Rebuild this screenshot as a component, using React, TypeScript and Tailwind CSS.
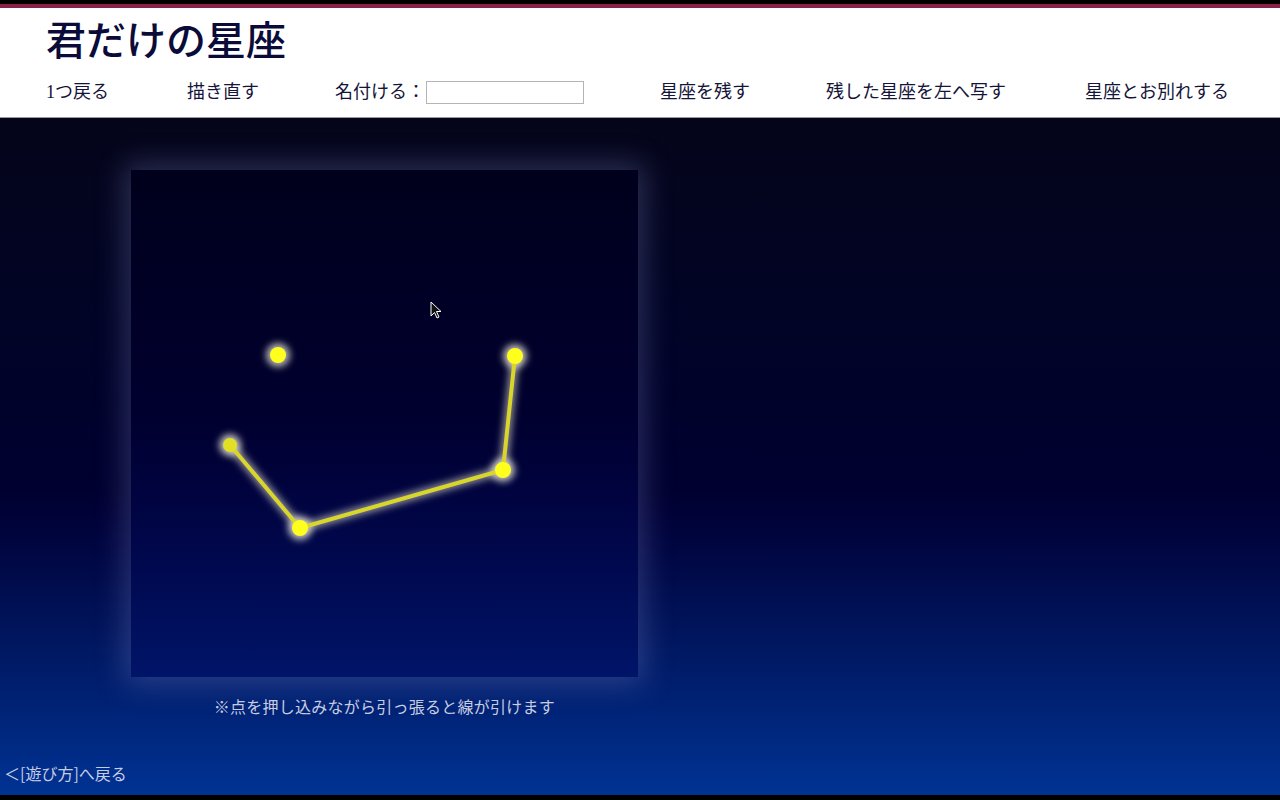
import React from 'react';

const stars = [
  { id: 'a', x: 147, y: 185, r: 8 },
  { id: 'b', x: 99, y: 275, r: 7 },
  { id: 'c', x: 169, y: 358, r: 8 },
  { id: 'd', x: 372, y: 300, r: 8 },
  { id: 'e', x: 384, y: 186, r: 8 },
];

const lines = [
  ['b', 'c'],
  ['c', 'd'],
  ['d', 'e'],
];

const navFont = { fontFamily: '"Liberation Serif", "Noto Sans CJK JP", serif' };

function StarCanvas() {
  const at = (id: string) => stars.find((s) => s.id === id)!;
  return (
    <div className="relative w-[507px] h-[507px] bg-gradient-to-b from-[#00001c] via-[#000030] to-[#001468] shadow-[0_0_28px_6px_rgba(150,160,230,0.28)]">
      <svg width="507" height="507" viewBox="0 0 507 507" className="absolute inset-0">
        <defs>
          <filter id="soft" x="-50%" y="-50%" width="200%" height="200%">
            <feGaussianBlur stdDeviation="3.5" />
          </filter>
        </defs>
        {/* halo */}
        <g stroke="#fffbe0" strokeOpacity="0.55" strokeWidth="9" strokeLinecap="round" filter="url(#soft)">
          {lines.map(([p, q]) => (
            <line key={p + q} x1={at(p).x} y1={at(p).y} x2={at(q).x} y2={at(q).y} />
          ))}
        </g>
        {stars.map((s) => (
          <circle key={s.id + 'h'} cx={s.x} cy={s.y} r={s.r + 4} fill="#fffce8" opacity="0.7" filter="url(#soft)" />
        ))}
        <g stroke="#d8d62c" strokeWidth="4" strokeLinecap="round">
          {lines.map(([p, q]) => (
            <line key={p + q} x1={at(p).x} y1={at(p).y} x2={at(q).x} y2={at(q).y} />
          ))}
        </g>
        {stars.map((s) => (
          <circle key={s.id} cx={s.x} cy={s.y} r={s.r} fill={s.id === 'b' ? '#e2e024' : '#ffff1e'} />
        ))}
        {/* mouse pointer */}
        <path
          d="M300 132 L300 146 L303.5 142.5 L306 148 L308 147 L305.5 141.5 L310 141.5 Z"
          fill="#111"
          stroke="#fff"
          strokeWidth="1"
        />
      </svg>
    </div>
  );
}

export default function App() {
  return (
    <div className="w-[1280px] h-[800px] flex flex-col bg-black overflow-hidden">
      <div className="h-[4px] bg-black" />
      <div className="h-[4px] bg-[#8c1f47]" />

      {/* Header */}
      <header className="h-[110px] bg-white border-b border-[#9a9aa6] pl-[46px] text-[#0b0b3a]" style={navFont}>
        <h1 className="pt-[10px] text-[40px] leading-[48px] font-medium">君だけの星座</h1>
        <nav className="mt-[14px] flex items-center text-[18px] leading-[24px] text-[#14143a]">
          <span className="w-[141px]">1つ戻る</span>
          <span className="w-[148px]">描き直す</span>
          <div className="w-[325px] flex items-center">
            <span>名付ける：</span>
            <input className="ml-[1px] w-[158px] h-[23px] border border-[#b4b4b4] bg-white outline-none" />
          </div>
          <span className="w-[166px]">星座を残す</span>
          <span className="w-[259px]">残した星座を左へ写す</span>
          <span>星座とお別れする</span>
        </nav>
      </header>

      {/* Main */}
      <main className="flex-1 flex flex-col bg-gradient-to-b from-[#05051a] via-[#000030] via-55% to-[#003394]">
        <div className="ml-[131px] mt-[52px] w-[507px]">
          <StarCanvas />
          <p
            className="mt-[19px] text-center text-[16px] leading-[20px] tracking-[0.25px] text-[#c9cde0]"
            style={{ fontFamily: '"Noto Sans CJK JP", sans-serif' }}
          >
            ※点を押し込みながら引っ張ると線が引けます
          </p>
        </div>
        <a
          className="mt-auto mb-[12px] pl-[4px] text-[16px] leading-[20px] text-[#c6cce4]"
          style={{ fontFamily: '"Noto Sans CJK JP", sans-serif' }}
        >
          ＜[遊び方]へ戻る
        </a>
      </main>

      <div className="h-[5px] bg-black" />
    </div>
  );
}
